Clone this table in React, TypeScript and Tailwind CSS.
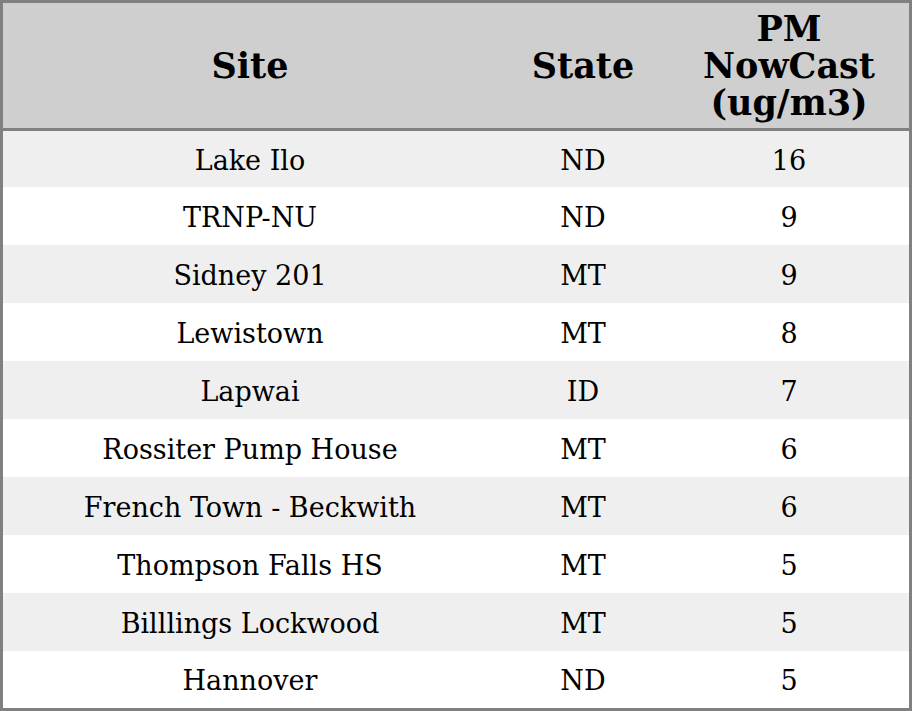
const rows: [string, string, number][] = [
  ["Lake Ilo", "ND", 16],
  ["TRNP-NU", "ND", 9],
  ["Sidney 201", "MT", 9],
  ["Lewistown", "MT", 8],
  ["Lapwai", "ID", 7],
  ["Rossiter Pump House", "MT", 6],
  ["French Town - Beckwith", "MT", 6],
  ["Thompson Falls HS", "MT", 5],
  ["Billlings Lockwood", "MT", 5],
  ["Hannover", "ND", 5],
];

export default function App() {
  return (
    <div
      className="h-[711px] w-[912px] overflow-hidden border-[3px] border-[#808080] bg-white text-black"
      style={{ fontFamily: '"DejaVu Serif", serif' }}
    >
      {/* header */}
      <div className="grid h-[128px] grid-cols-[494px_172px_240px] border-b-[3px] border-[#808080] bg-[#cfcfcf] text-[35px] font-bold leading-[37px]">
        <div className="flex items-center justify-center text-center">Site</div>
        <div className="flex items-center justify-center text-center">State</div>
        <div className="flex items-center justify-center text-center">
          PM
          <br />
          NowCast
          <br />
          (ug/m3)
        </div>
      </div>

      {rows.map(([site, state, val], i) => (
        <div
          key={site}
          className={[
            "grid grid-cols-[494px_172px_240px] items-center pt-[4px] text-center text-[27px]",
            i === 0 ? "h-[56px]" : i === rows.length - 1 ? "h-[57px]" : "h-[58px]",
            i % 2 === 0 ? "bg-[#efefef]" : "bg-white",
          ].join(" ")}
        >
          <div>{site}</div>
          <div>{state}</div>
          <div>{val}</div>
        </div>
      ))}
    </div>
  );
}
